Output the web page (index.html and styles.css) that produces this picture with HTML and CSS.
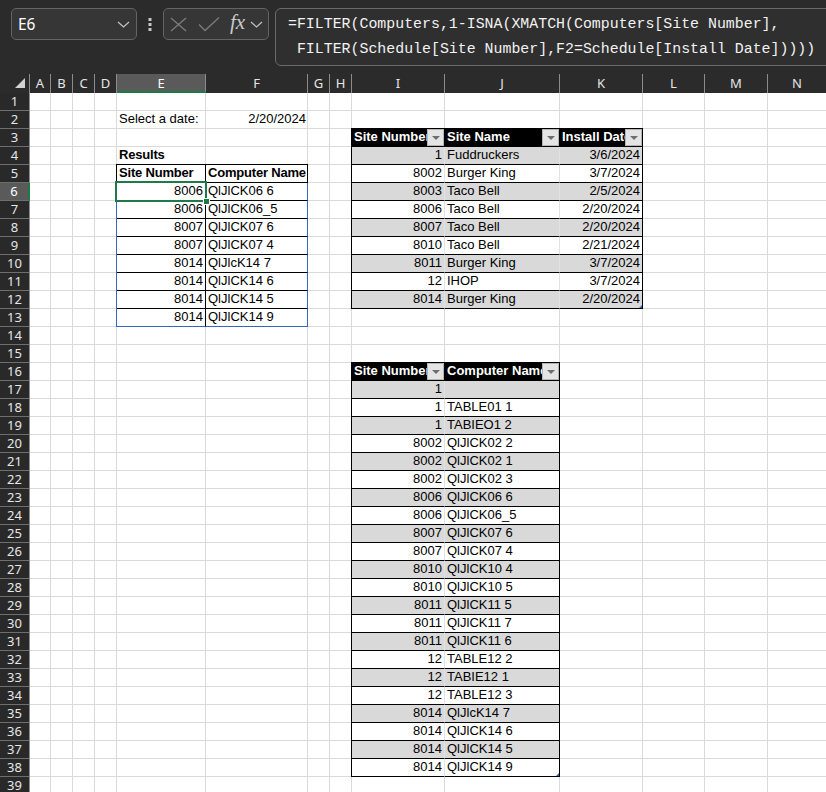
FILE: index.html
```html
<!DOCTYPE html>
<html lang="en">
<head>
<meta charset="utf-8">
<title>Install schedule</title>
<link rel="stylesheet" href="styles.css">
</head>
<body>
<div class="app">

  <!-- name box + formula bar -->
  <div class="fbar">
    <div class="namebox">
      <span class="ref">E6</span>
      <svg class="chev" width="13" height="7" viewBox="0 0 13 7"><polyline points="1,1 6.5,6 12,1"/></svg>
    </div>
    <div class="grip">
      <svg width="4" height="14" viewBox="0 0 4 14"><rect x="0.5" y="0" width="3" height="3"/><rect x="0.5" y="5" width="3" height="3"/><rect x="0.5" y="10" width="3" height="3"/></svg>
    </div>
    <div class="fxbox">
      <svg class="ic-x" width="17" height="15" viewBox="0 0 17 15"><line x1="1" y1="1" x2="16" y2="14"/><line x1="16" y1="1" x2="1" y2="14"/></svg>
      <svg class="ic-ok" width="22" height="15" viewBox="0 0 22 15"><polyline points="1,7.5 7,13.5 21,0.5"/></svg>
      <span class="fx">fx</span>
      <svg class="chev" width="13" height="7" viewBox="0 0 13 7"><polyline points="1,1 6.5,6 12,1"/></svg>
    </div>
    <div class="formula">=FILTER(Computers,1-ISNA(XMATCH(Computers[Site Number],
 FILTER(Schedule[Site Number],F2=Schedule[Install Date]))))</div>
  </div>

  <!-- column letters -->
  <div class="colheads">
    <div class="corner"><svg width="29" height="19" viewBox="0 0 29 19"><polygon points="25,4 25,14 15,14"/></svg></div>
    <div class="ch col-a">A</div>
    <div class="ch col-b">B</div>
    <div class="ch col-c">C</div>
    <div class="ch col-d">D</div>
    <div class="ch col-e active">E</div>
    <div class="ch col-f">F</div>
    <div class="ch col-g">G</div>
    <div class="ch col-h">H</div>
    <div class="ch col-i">I</div>
    <div class="ch col-j">J</div>
    <div class="ch col-k">K</div>
    <div class="ch col-l">L</div>
    <div class="ch col-m">M</div>
    <div class="ch col-n">N</div>
  </div>

  <div class="body">
    <!-- row numbers -->
    <div class="rowheads">
      <div class="rh">1</div><div class="rh">2</div><div class="rh">3</div><div class="rh">4</div>
      <div class="rh">5</div><div class="rh active">6</div><div class="rh">7</div><div class="rh">8</div>
      <div class="rh">9</div><div class="rh">10</div><div class="rh">11</div><div class="rh">12</div>
      <div class="rh">13</div><div class="rh">14</div><div class="rh">15</div><div class="rh">16</div>
      <div class="rh">17</div><div class="rh">18</div><div class="rh">19</div><div class="rh">20</div>
      <div class="rh">21</div><div class="rh">22</div><div class="rh">23</div><div class="rh">24</div>
      <div class="rh">25</div><div class="rh">26</div><div class="rh">27</div><div class="rh">28</div>
      <div class="rh">29</div><div class="rh">30</div><div class="rh">31</div><div class="rh">32</div>
      <div class="rh">33</div><div class="rh">34</div><div class="rh">35</div><div class="rh">36</div>
      <div class="rh">37</div><div class="rh">38</div><div class="rh">39</div>
    </div>

    <!-- worksheet -->
    <div class="sheet">
      <div class="cell lbl-date">Select a date:</div>
      <div class="cell num val-date">2/20/2024</div>
      <div class="cell bold lbl-results">Results</div>

      <!-- spilled FILTER result -->
      <div class="results">
        <div class="rhead">
          <div>Site Number</div><div>Computer Name</div>
        </div>
        <div class="rbody">
          <div class="num current">8006<span class="sel"><i class="handle"></i></span></div><div>QlJlCK06 6</div>
          <div class="num">8006</div><div>QlJlCK06_5</div>
          <div class="num">8007</div><div>QlJlCK07 6</div>
          <div class="num">8007</div><div>QlJlCK07 4</div>
          <div class="num">8014</div><div>QlJlcK14 7</div>
          <div class="num">8014</div><div>QlJlCK14 6</div>
          <div class="num">8014</div><div>QlJlCK14 5</div>
          <div class="num">8014</div><div>QlJlCK14 9</div>
        </div>
      </div>

      <!-- Schedule table -->
      <div class="tbl schedule">
        <div class="tr head">
          <div><span>Site Number</span><b class="fb"></b></div>
          <div><span>Site Name</span><b class="fb"></b></div>
          <div><span>Install Date</span><b class="fb"></b></div>
        </div>
        <div class="tr band"><div class="num">1</div><div>Fuddruckers</div><div class="num">3/6/2024</div></div>
        <div class="tr"><div class="num">8002</div><div>Burger King</div><div class="num">3/7/2024</div></div>
        <div class="tr band"><div class="num">8003</div><div>Taco Bell</div><div class="num">2/5/2024</div></div>
        <div class="tr"><div class="num">8006</div><div>Taco Bell</div><div class="num">2/20/2024</div></div>
        <div class="tr band"><div class="num">8007</div><div>Taco Bell</div><div class="num">2/20/2024</div></div>
        <div class="tr"><div class="num">8010</div><div>Taco Bell</div><div class="num">2/21/2024</div></div>
        <div class="tr band"><div class="num">8011</div><div>Burger King</div><div class="num">3/7/2024</div></div>
        <div class="tr"><div class="num">12</div><div>IHOP</div><div class="num">3/7/2024</div></div>
        <div class="tr band last"><div class="num">8014</div><div>Burger King</div><div class="num">2/20/2024</div></div>
      </div>

      <!-- Computers table -->
      <div class="tbl computers">
        <div class="tr head">
          <div><span>Site Number</span><b class="fb"></b></div>
          <div><span>Computer Name</span><b class="fb"></b></div>
        </div>
        <div class="tr band"><div class="num">1</div><div></div></div>
        <div class="tr"><div class="num">1</div><div>TABLE01 1</div></div>
        <div class="tr band"><div class="num">1</div><div>TABIEO1 2</div></div>
        <div class="tr"><div class="num">8002</div><div>QlJlCK02 2</div></div>
        <div class="tr band"><div class="num">8002</div><div>QlJlCK02 1</div></div>
        <div class="tr"><div class="num">8002</div><div>QlJlCK02 3</div></div>
        <div class="tr band"><div class="num">8006</div><div>QlJlCK06 6</div></div>
        <div class="tr"><div class="num">8006</div><div>QlJlCK06_5</div></div>
        <div class="tr band"><div class="num">8007</div><div>QlJlCK07 6</div></div>
        <div class="tr"><div class="num">8007</div><div>QlJlCK07 4</div></div>
        <div class="tr band"><div class="num">8010</div><div>QlJlCK10 4</div></div>
        <div class="tr"><div class="num">8010</div><div>QlJlCK10 5</div></div>
        <div class="tr band"><div class="num">8011</div><div>QlJlCK11 5</div></div>
        <div class="tr"><div class="num">8011</div><div>QlJlCK11 7</div></div>
        <div class="tr band"><div class="num">8011</div><div>QlJlCK11 6</div></div>
        <div class="tr"><div class="num">12</div><div>TABLE12 2</div></div>
        <div class="tr band"><div class="num">12</div><div>TABIE12 1</div></div>
        <div class="tr"><div class="num">12</div><div>TABLE12 3</div></div>
        <div class="tr band"><div class="num">8014</div><div>QlJlcK14 7</div></div>
        <div class="tr"><div class="num">8014</div><div>QlJlCK14 6</div></div>
        <div class="tr band"><div class="num">8014</div><div>QlJlCK14 5</div></div>
        <div class="tr last"><div class="num">8014</div><div>QlJlCK14 9</div></div>
      </div>
    </div>
  </div>
</div>
</body>
</html>
```

FILE: styles.css
```css
* { box-sizing: border-box; }

html, body { margin: 0; padding: 0; }

body {
  width: 826px;
  height: 792px;
  overflow: hidden;
  background: #2b2b2b;
  font-family: "Liberation Sans", Arial, sans-serif;
}

.app { width: 826px; }

/* ---------- formula bar ---------- */
.fbar {
  height: 74px;
  display: flex;
  align-items: flex-start;
  padding: 8px 0 0 11px;
}

.namebox, .fxbox {
  height: 32px;
  border: 1px solid #646464;
  border-radius: 5px;
  background: #363636;
  display: flex;
  align-items: center;
  flex: none;
}

.namebox {
  width: 126px;
  justify-content: space-between;
  padding: 0 6px 0 6px;
}

.ref {
  color: #ffffff;
  font: 15.5px "Noto Sans", sans-serif;
}

.chev polyline {
  fill: none;
  stroke: #c4c4c4;
  stroke-width: 1.2;
}

.grip {
  width: 26px;
  height: 32px;
  flex: none;
  display: flex;
  align-items: center;
  justify-content: center;
  padding: 2px 0 0 0;
}

.grip rect { fill: #c8c8c8; }

.fxbox {
  width: 106px;
  padding-left: 6px;
}

.ic-x line, .ic-ok polyline {
  fill: none;
  stroke: #7c7c7c;
  stroke-width: 1.3;
}

.ic-ok { margin-left: 11px; }

.fx {
  margin-left: 10px;
  color: #cacaca;
  font: italic 21px/1 "Liberation Serif", serif;
  margin-top: -3px;
}

.fxbox .chev { margin-left: 5px; }

.formula {
  flex: none;
  width: 580px;
  height: 58px;
  margin-left: 6px;
  border: 1px solid #6a6a6a;
  border-radius: 6px;
  background: #2f2f2f;
  padding: 3px 0 0 12px;
  color: #f2f2f2;
  font: 14.9px/25px "Liberation Mono", monospace;
  white-space: pre;
}

/* ---------- headers ---------- */
.colheads {
  height: 19px;
  display: flex;
  background: #2b2b2b;
  font: 13px/18px "Noto Sans", sans-serif;
  color: #e6e6e6;
}

.corner {
  width: 30px;
  flex: none;
  border-right: 1px solid #8c8c8c;
}

.corner svg { display: block; }
.corner polygon { fill: #d2d2d2; }

.ch {
  flex: none;
  text-align: center;
  border-right: 1px solid #8c8c8c;
}

.ch.active {
  background: #5a5a5a;
  color: #ffffff;
  border-bottom: 2px solid #1f7a4a;
}

.col-a { width: 21px; }
.col-b { width: 22px; }
.col-c { width: 22px; }
.col-d { width: 22px; }
.col-e { width: 89px; }
.col-f { width: 102px; }
.col-g { width: 22px; }
.col-h { width: 22px; }
.col-i { width: 93px; }
.col-j { width: 115px; }
.col-k { width: 83px; }
.col-l { width: 62px; }
.col-m { width: 63px; }
.col-n { flex: 1; border-right: none; }

.body { display: flex; }

.rowheads {
  width: 30px;
  flex: none;
  background: #292929;
  border-right: 1px solid #8c8c8c;
  font: 13px/17px "Noto Sans", sans-serif;
  color: #e6e6e6;
}

.rh {
  height: 18px;
  text-align: center;
  border-bottom: 1px solid #6e6e6e;
}

.rh.active {
  background: #5a5a5a;
  color: #ffffff;
  border-right: 2px solid #1f7a4a;
  margin-right: -1px;
}

/* ---------- worksheet grid ---------- */
.sheet {
  flex: 1;
  display: grid;
  grid-template-columns: 21px 22px 22px 22px 89px 102px 22px 22px 93px 115px 83px 62px 63px 1fr;
  grid-template-rows: repeat(39, 18px);
  font-size: 13px;
  line-height: 15px;
  color: #000;
  background:
    linear-gradient(#dadada, #dadada) 20px 0 / 1px 100% no-repeat,
    linear-gradient(#dadada, #dadada) 42px 0 / 1px 100% no-repeat,
    linear-gradient(#dadada, #dadada) 64px 0 / 1px 100% no-repeat,
    linear-gradient(#dadada, #dadada) 86px 0 / 1px 100% no-repeat,
    linear-gradient(#dadada, #dadada) 175px 0 / 1px 100% no-repeat,
    linear-gradient(#dadada, #dadada) 277px 0 / 1px 100% no-repeat,
    linear-gradient(#dadada, #dadada) 299px 0 / 1px 100% no-repeat,
    linear-gradient(#dadada, #dadada) 321px 0 / 1px 100% no-repeat,
    linear-gradient(#dadada, #dadada) 414px 0 / 1px 100% no-repeat,
    linear-gradient(#dadada, #dadada) 529px 0 / 1px 100% no-repeat,
    linear-gradient(#dadada, #dadada) 612px 0 / 1px 100% no-repeat,
    linear-gradient(#dadada, #dadada) 674px 0 / 1px 100% no-repeat,
    linear-gradient(#dadada, #dadada) 737px 0 / 1px 100% no-repeat,
    repeating-linear-gradient(to bottom, transparent 0 17px, #dadada 17px 18px),
    #ffffff;
}

.cell {
  padding: 0 2px;
  white-space: nowrap;
}

.num { text-align: right; }
.bold { font-weight: bold; letter-spacing: -0.2px; }

.lbl-date    { grid-column: 5; grid-row: 2; }
.val-date    { grid-column: 6; grid-row: 2; }
.lbl-results { grid-column: 5; grid-row: 4; }

/* spill range E5:F13 */
.results {
  grid-column: 5 / 7;
  grid-row: 5 / 14;
  margin: -1px 0 0 -1px;
  display: flex;
  flex-direction: column;
}

.rhead, .rbody {
  display: grid;
  grid-template-columns: 89px 102px;
  grid-auto-rows: 18px;
}

.rhead {
  border-top: 1px solid #000;
  border-left: 1px solid #000;
  font-weight: bold;
  letter-spacing: -0.2px;
}

.rbody { border-left: 1px solid #3a64c4; }

.rhead > div, .rbody > div {
  background: #fff;
  padding: 0 2px;
  white-space: nowrap;
  border-right: 1px solid #000;
  border-bottom: 1px solid #000;
}

.rbody > div:nth-child(2n) { border-right-color: #3a64c4; }
.rbody > div:nth-last-child(-n+2) { border-bottom-color: #3a64c4; }

.current { position: relative; }

.sel {
  position: absolute;
  inset: -2px;
  border: 2px solid #1f7a4a;
}

.handle {
  position: absolute;
  right: -5px;
  bottom: -5px;
  width: 7px;
  height: 7px;
  background: #1f7a4a;
  border: 1px solid #ffffff;
}

/* ---------- Excel tables ---------- */
.tbl {
  margin: -1px 0 0 -1px;
  border-top: 1px solid #000;
  border-left: 1px solid #000;
  display: grid;
  grid-auto-rows: 18px;
}

.schedule {
  grid-column: 9 / 12;
  grid-row: 3 / 13;
  grid-template-columns: 93px 115px 83px;
}

.computers {
  grid-column: 9 / 11;
  grid-row: 16 / 39;
  grid-template-columns: 93px 115px;
}

.tr { display: contents; }

.tr > div {
  background: #ffffff;
  padding: 0 2px;
  white-space: nowrap;
  overflow: hidden;
  border-right: 1px solid #e2e2e2;
  border-bottom: 1px solid #000;
}

.tr > div:last-child { border-right-color: #000; }
.tr.band > div { background: #d9d9d9; }

/* table resize corner */
.tr.last > div:last-child { position: relative; }
.tr.last > div:last-child::after {
  content: "";
  position: absolute;
  right: 0;
  bottom: 0;
  border-left: 3px solid transparent;
  border-bottom: 3px solid #3a64c4;
}

.tr.head > div {
  background: #000;
  color: #fff;
  font-weight: bold;
  border-right-color: #000;
  display: flex;
  padding-right: 0;
}

.tr.head span {
  flex: 1;
  min-width: 0;
  overflow: hidden;
  line-height: 16px;
}

.fb {
  flex: none;
  width: 17px;
  height: 17px;
  background: #e4e4e4;
  border: 1px solid #b4b4b4;
  display: flex;
  align-items: center;
  justify-content: center;
}

.fb::after {
  content: "";
  width: 0;
  height: 0;
  border-left: 4px solid transparent;
  border-right: 4px solid transparent;
  border-top: 4px solid #6e6e6e;
  margin-top: 1px;
}
```
